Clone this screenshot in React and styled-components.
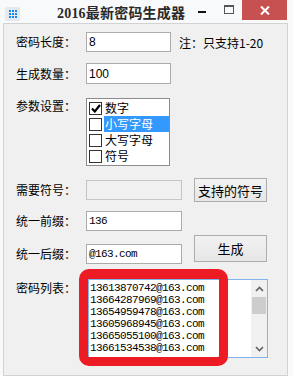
import React from 'react';
import styled, { createGlobalStyle } from 'styled-components';

const GlobalStyle = createGlobalStyle`
  body {
    margin: 0;
    background: #fbfbfb;
    font-family: "Noto Sans CJK SC", "Liberation Sans", sans-serif;
  }
`;

const Window = styled.div`
  width: 293px;
  height: 376px;
  background: #f8f9fa;
  display: flex;
  flex-direction: column;
  overflow: hidden;
`;

const TitleBar = styled.div`
  height: 28px;
  display: flex;
  align-items: flex-start;
`;

const AppIcon = styled.div`
  width: 15px;
  height: 14px;
  margin: 7px 0 0 5px;
  background: #e4e9ef;
  border-radius: 2px;
  display: grid;
  grid-template-columns: repeat(3, 2px);
  grid-auto-rows: 2px;
  gap: 1px;
  align-content: center;
  justify-content: center;
`;

const Dot = styled.span`
  background: #1a86f0;
`;

const Title = styled.div`
  margin: 6px 0 0 37px;
  font-family: "Liberation Serif", "Noto Sans CJK SC", serif;
  font-weight: bold;
  font-size: 14px;
  line-height: 16px;
  color: #2a2a2a;
  letter-spacing: 0.2px;
`;

const MinButton = styled.div`
  width: 8px;
  height: 2px;
  background: #111;
  margin: 11px 0 0 auto;
`;

const MaxButton = styled.div`
  width: 8px;
  height: 6px;
  border: 1px solid #555;
  border-top-width: 2px;
  margin: 5px 0 0 18px;
`;

const CloseButton = styled.div`
  width: 45px;
  height: 20px;
  margin: 0 6px 0 8px;
  background: #c75050;
  display: flex;
  align-items: center;
  justify-content: center;
`;

const Client = styled.div`
  flex: 0 0 auto;
  height: 343px;
  margin: 0 5px 0 3px;
  border: 1px solid #d2d2d2;
  background: #f0f0f0;
  padding: 8px 0 0 12px;
  font-size: 12px;
  color: #000;
`;

const Row = styled.div`
  display: flex;
  align-items: ${(p) => p.$align || 'center'};
  margin-top: ${(p) => p.$top || 0}px;
`;

const Column = styled.div`
  display: flex;
  flex-direction: column;
`;

const Label = styled.div`
  width: 70px;
  line-height: ${(p) => p.$lh || 16}px;
  white-space: nowrap;
`;

const Input = styled.div`
  width: ${(p) => p.$w}px;
  height: ${(p) => p.$h || 20}px;
  box-sizing: border-box;
  border: 1px solid ${(p) => (p.$disabled ? '#c4c4c4' : '#ababab')};
  background: ${(p) => (p.$disabled ? '#f0f0f0' : '#fff')};
  padding-left: 2px;
  display: flex;
  align-items: center;
  font-family: ${(p) => (p.$mono ? '"Liberation Mono", monospace' : '"Liberation Sans", sans-serif')};
  font-size: ${(p) => (p.$mono ? 11 : 12)}px;
  letter-spacing: ${(p) => (p.$mono ? '-0.6px' : '0')};
`;

const Note = styled.div`
  margin-left: 8px;
  white-space: nowrap;
`;

const Button = styled.div`
  width: 73px;
  height: ${(p) => p.$h}px;
  margin: ${(p) => p.$top || 0}px 0 0 12px;
  box-sizing: border-box;
  border: 1px solid #adadad;
  background: linear-gradient(#f2f2f2, #e6e6e6);
  display: flex;
  align-items: center;
  justify-content: center;
  font-size: 13px;
`;

const CheckList = styled.div`
  width: 84px;
  height: 68px;
  box-sizing: border-box;
  border: 1px solid #8c8c8c;
  background: #fff;
  padding-top: 1px;
`;

const CheckItem = styled.div`
  height: 16px;
  display: flex;
  align-items: center;
  padding-left: 2px;
`;

const Box = styled.div`
  width: 13px;
  height: 13px;
  box-sizing: border-box;
  border: 1px solid #333;
  background: #fff;
  display: flex;
  align-items: center;
  justify-content: center;
`;

const ItemText = styled.div`
  flex: 1;
  height: 16px;
  margin-left: 2px;
  padding-left: 1px;
  line-height: 16px;
  font-size: 12px;
  overflow: hidden;
  background: ${(p) => (p.$selected ? '#3399ff' : 'transparent')};
  color: ${(p) => (p.$selected ? '#fff' : '#000')};
`;

const ListWrap = styled.div`
  position: relative;
  margin-left: 2px;
`;

const ListBox = styled.div`
  width: 180px;
  height: 79px;
  box-sizing: border-box;
  border: 1px solid #7eb4ea;
  background: #fff;
  display: flex;
`;

const Lines = styled.div`
  flex: 1;
  padding: 2px 0 0 1px;
  font-family: "Liberation Mono", monospace;
  font-size: 11px;
  letter-spacing: -0.6px;
  line-height: 12px;
  white-space: pre;
`;

const ScrollBar = styled.div`
  width: 16px;
  background: #f0f0f0;
  display: flex;
  flex-direction: column;
  align-items: center;
`;

const Arrow = styled.div`
  height: 17px;
  display: flex;
  align-items: center;
  justify-content: center;
`;

const Thumb = styled.div`
  width: 14px;
  height: 17px;
  background: #cdcdcd;
  margin-bottom: auto;
`;

const Highlight = styled.div`
  position: absolute;
  left: -9px;
  top: -10px;
  width: 149px;
  height: 97px;
  box-sizing: border-box;
  border: 9px solid #ed1c24;
  border-top-width: 10px;
  border-radius: 10px;
  pointer-events: none;
`;

const options = [
  { text: '数字', checked: true },
  { text: '小写字母', selected: true },
  { text: '大写字母' },
  { text: '符号' },
];

const passwords = [
  '13613870742@163.com',
  '13664287969@163.com',
  '13654959478@163.com',
  '13605968945@163.com',
  '13665055100@163.com',
  '13661534538@163.com',
];

const Chevron = ({ up }) => (
  <svg width="9" height="6" viewBox="0 0 9 6">
    <polyline
      points={up ? '1,5 4.5,1.5 8,5' : '1,1 4.5,4.5 8,1'}
      fill="none"
      stroke="#606060"
      strokeWidth="1.6"
    />
  </svg>
);

export default function App() {
  return (
    <Window>
      <GlobalStyle />
      <TitleBar>
        <AppIcon>
          {Array.from({ length: 9 }).map((_, i) => (
            <Dot key={i} />
          ))}
        </AppIcon>
        <Title>2016最新密码生成器</Title>
        <MinButton />
        <MaxButton />
        <CloseButton>
          <svg width="10" height="9" viewBox="0 0 10 9">
            <path d="M1 0.5 L9 8.5 M9 0.5 L1 8.5" stroke="#fff" strokeWidth="2" />
          </svg>
        </CloseButton>
      </TitleBar>

      <Client>
        <Row>
          <Label>密码长度：</Label>
          <Input $w={85}>8</Input>
          <Note>注：只支持1-20</Note>
        </Row>

        <Row $top={11}>
          <Label>生成数量：</Label>
          <Input $w={85} $h={21}>100</Input>
        </Row>

        <Row $top={14} $align="flex-start">
          <Label $lh={15}>参数设置：</Label>
          <CheckList>
            {options.map((o) => (
              <CheckItem key={o.text}>
                <Box>
                  {o.checked && (
                    <svg width="10" height="9" viewBox="0 0 10 9">
                      <polyline points="1,4.5 3.8,7.5 9,1" fill="none" stroke="#000" strokeWidth="2.2" />
                    </svg>
                  )}
                </Box>
                <ItemText $selected={o.selected}>{o.text}</ItemText>
              </CheckItem>
            ))}
          </CheckList>
        </Row>

        <Row $top={12}>
          <Label>需要符号：</Label>
          <Input $w={96} $disabled />
          <Button $h={24}>支持的符号</Button>
        </Row>

        <Row $top={9} $align="flex-start">
          <Column>
            <Row>
              <Label>统一前缀：</Label>
              <Input $w={96} $mono>136</Input>
            </Row>
            <Row $top={13}>
              <Label>统一后缀：</Label>
              <Input $w={96} $mono>@163.com</Input>
            </Row>
          </Column>
          <Button $h={27} $top={24}>生成</Button>
        </Row>

        <Row $top={15} $align="flex-start">
          <Label $lh={18}>密码列表：</Label>
          <ListWrap>
            <ListBox>
              <Lines>{passwords.join('\n')}</Lines>
              <ScrollBar>
                <Arrow>
                  <Chevron up />
                </Arrow>
                <Thumb />
                <Arrow>
                  <Chevron />
                </Arrow>
              </ScrollBar>
            </ListBox>
            <Highlight />
          </ListWrap>
        </Row>
      </Client>
    </Window>
  );
}
